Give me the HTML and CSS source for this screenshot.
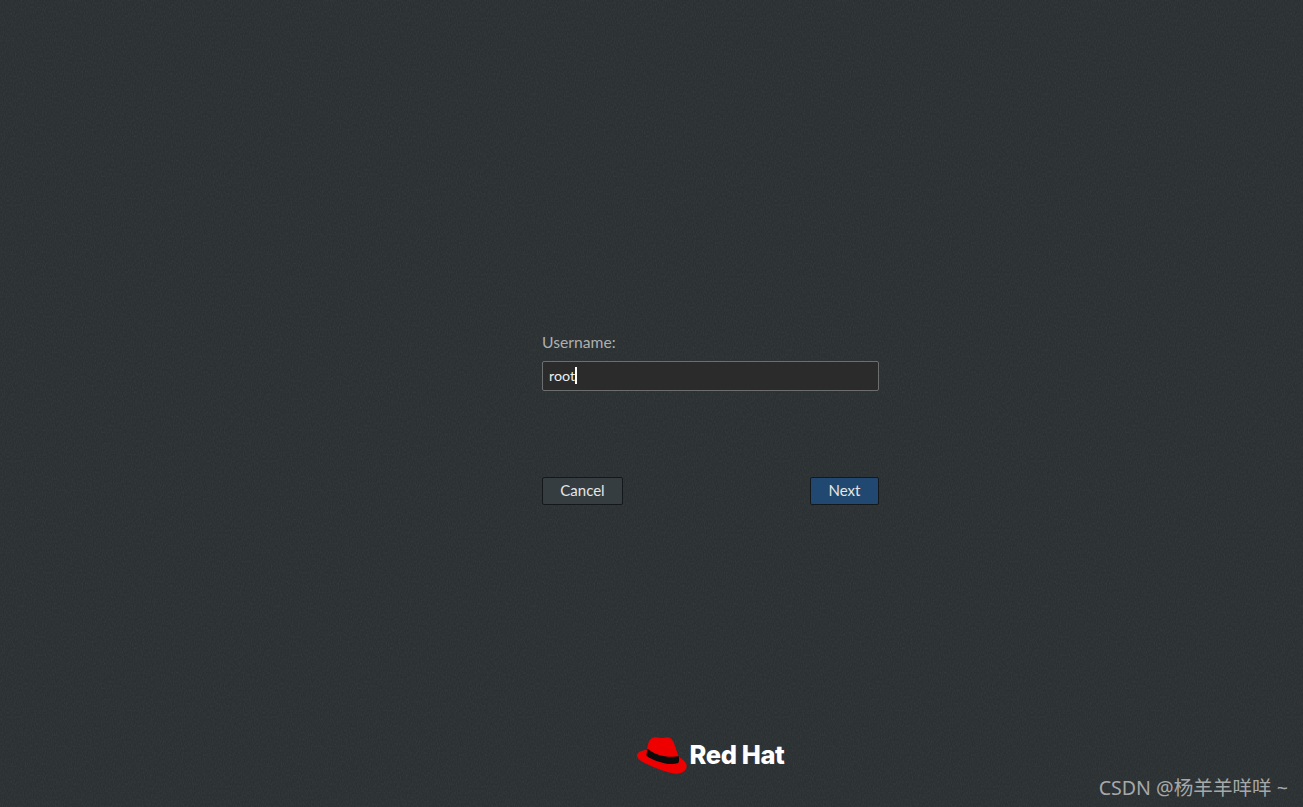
FILE: index.html
```html
<!DOCTYPE html>
<html lang="en">
<head>
    <meta charset="UTF-8">
    <meta name="viewport" content="width=device-width, initial-scale=1.0">
    <title>Login</title>
    <link rel="stylesheet" href="styles.css">
</head>
<body>
    <main class="login">
        <form class="login-form">
            <label class="field-label" for="username">Username:</label>
            <div class="entry" id="username">root<span class="caret"></span></div>
            <div class="buttons">
                <button type="button" class="btn">Cancel</button>
                <button type="button" class="btn btn-next">Next</button>
            </div>
        </form>
    </main>
    <footer class="brand">
        <svg class="hat" width="50" height="37" viewBox="12 9 150 111">
            <path fill="#e00" d="M42 47C44 34 46 18 58 12C66 8 76 11 84 12C92 13 102 6 112 12C120 18 125 32 129 45L137 68C150 76 161 86 161 97C161 111 146 120 128 119C102 117 74 105 50 94C34 87 12 78 12 64C12 54 28 49 42 47Z"/>
            <path fill="#0b0b0b" d="M44 44C60 59 98 73 137 67C139 74 139 81 136 87C112 95 80 86 58 76C50 72 44 69 40 64C41 57 42 50 44 44Z"/>
        </svg>
        <span class="brand-name">Red Hat</span>
    </footer>
    <div class="watermark">CSDN @杨羊羊咩咩 ~</div>
</body>
</html>
```

FILE: styles.css
```css
* {
    box-sizing: border-box;
}
body {
    margin: 0;
    height: 807px;
    padding-left: 118px;
    overflow: hidden;
    display: flex;
    flex-direction: column;
    align-items: center;
    background-color: #2b3033;
    background-image: url("data:image/svg+xml,%3Csvg xmlns='http://www.w3.org/2000/svg' width='256' height='256'%3E%3Cfilter id='n'%3E%3CfeTurbulence type='fractalNoise' baseFrequency='0.9 0.45' numOctaves='2' stitchTiles='stitch'/%3E%3CfeColorMatrix values='0 0 0 0 0.5 0 0 0 0 0.5 0 0 0 0 0.5 0.12 0 0 0 -0.04'/%3E%3C/filter%3E%3Crect width='256' height='256' filter='url(%23n)'/%3E%3C/svg%3E");
    font-family: "Lato", "Noto Sans CJK SC", sans-serif;
    position: relative;
}
.login {
    flex: 1;
    padding-top: 333px;
}
.login-form {
    width: 337px;
    display: flex;
    flex-direction: column;
}
.field-label {
    font-size: 15.7px;
    line-height: 19px;
    color: #adb0b0;
}
.entry {
    margin-top: 9px;
    height: 30px;
    padding-left: 6px;
    border: 1px solid #6c6e6d;
    border-radius: 2px;
    background-color: #2b2b2c;
    color: #eeeeec;
    font-size: 14.3px;
    line-height: 27px;
    padding-bottom: 1px;
    display: flex;
    align-items: center;
}
.caret {
    width: 2px;
    height: 17px;
    background-color: #fff;
}
.buttons {
    margin-top: 86px;
    display: flex;
    justify-content: space-between;
}
.btn {
    height: 28px;
    width: 81px;
    padding: 0 0 2px;
    border: 1px solid #14181a;
    border-radius: 2px;
    background-color: #363d40;
    color: #e4e6e5;
    font-family: inherit;
    font-size: 15px;
}
.btn-next {
    width: 69px;
    background-color: #214870;
}
.brand {
    height: 67px;
    display: flex;
    align-items: flex-start;
    gap: 3px;
    margin-bottom: 3px;
}
.hat {
    display: block;
}
.brand-name {
    margin-top: 1px;
    color: #fff;
    font-family: "Inter", sans-serif;
    font-weight: 800;
    font-size: 25.5px;
    line-height: 34px;
    letter-spacing: -0.4px;
}
.watermark {
    position: absolute;
    right: 15px;
    bottom: 5px;
    color: #a6a9a9;
    font-family: "Noto Sans", "Noto Sans CJK SC", sans-serif;
    font-size: 19.6px;
    line-height: 28px;
    white-space: nowrap;
}
```
